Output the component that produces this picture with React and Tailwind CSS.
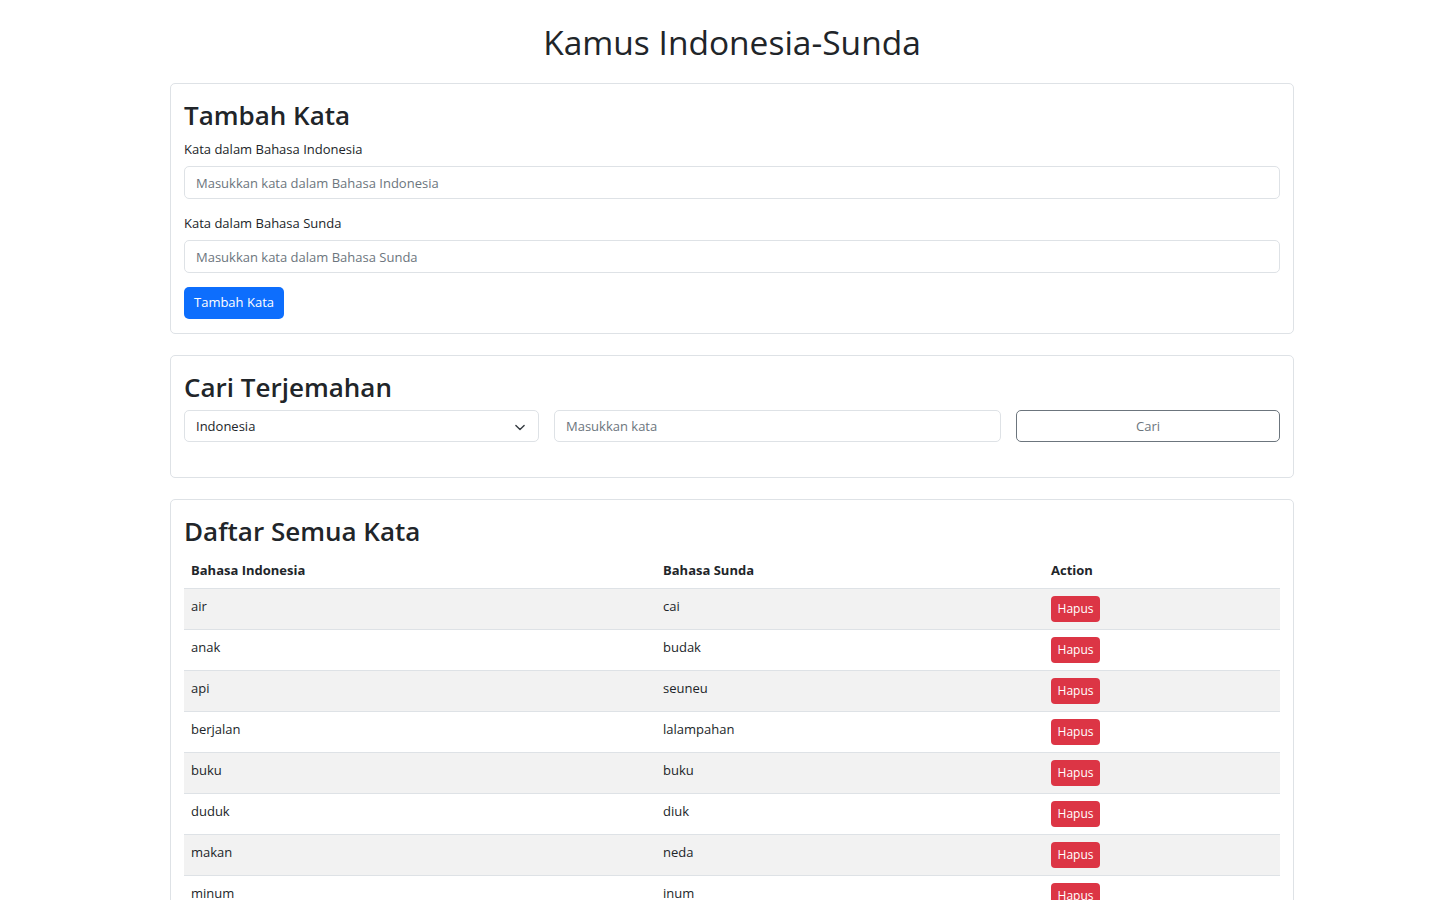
import React, { useState } from "react";

const words = [
  { id: "air", su: "cai" },
  { id: "anak", su: "budak" },
  { id: "api", su: "seuneu" },
  { id: "berjalan", su: "lalampahan" },
  { id: "buku", su: "buku" },
  { id: "duduk", su: "diuk" },
  { id: "makan", su: "neda" },
  { id: "minum", su: "inum" },
  { id: "pergi", su: "indit" },
  { id: "rumah", su: "imah" },
];

function Chevron() {
  return (
    <svg width="14" height="11" viewBox="0 0 16 16" className="text-[#343a40]">
      <path d="m2 5 6 6 6-6" fill="none" stroke="currentColor" strokeWidth="2" strokeLinecap="round" strokeLinejoin="round" />
    </svg>
  );
}

export default function App() {
  const [list, setList] = useState(words);
  const [lang, setLang] = useState("Indonesia");

  const remove = (id) => setList((l) => l.filter((w) => w.id !== id));

  return (
    <div className="min-h-screen bg-white text-[#212529] font-['Open_Sans',sans-serif]">
      <div className="w-[1124px] ml-[170px] pt-[21px]">
        <h1 className="text-center text-[33.5px] leading-[43px] font-medium mb-[19px]">
          Kamus Indonesia-Sunda
        </h1>

        <div className="border border-[#dee2e6] rounded-[5px] px-[13px] py-[14px] mb-[21px]">
          <h2 className="text-[26px] leading-[34px] font-semibold mb-[7px]">Tambah Kata</h2>
          <label className="block text-[13px] leading-[21px] mb-[6px]">Kata dalam Bahasa Indonesia</label>
          <input
            className="block w-full h-[33px] border border-[#dee2e6] rounded-[5px] px-[11px] text-[13px] outline-none placeholder:text-[#6c757d]"
            placeholder="Masukkan kata dalam Bahasa Indonesia"
          />
          <label className="block text-[13px] leading-[21px] mt-[14px] mb-[6px]">Kata dalam Bahasa Sunda</label>
          <input
            className="block w-full h-[33px] border border-[#dee2e6] rounded-[5px] px-[11px] text-[13px] outline-none placeholder:text-[#6c757d]"
            placeholder="Masukkan kata dalam Bahasa Sunda"
          />
          <button className="mt-[14px] h-[32px] w-[100px] bg-[#0d6efd] text-white text-[13px] rounded-[5px]">
            Tambah Kata
          </button>
        </div>

        <div className="border border-[#dee2e6] rounded-[5px] px-[13px] pt-[14px] pb-[35px] mb-[21px]">
          <h2 className="text-[26px] leading-[34px] font-semibold mb-[6px]">Cari Terjemahan</h2>
          <div className="grid grid-cols-[355px_447px_1fr] gap-[15px]">
            <div className="relative h-[32px] border border-[#dee2e6] rounded-[5px] flex items-center px-[11px] pt-[2px] text-[13px]">
              <span className="flex-1">{lang}</span>
              <Chevron />
              <select
                value={lang}
                onChange={(e) => setLang(e.target.value)}
                className="absolute inset-0 opacity-0 cursor-pointer"
              >
                <option>Indonesia</option>
                <option>Sunda</option>
              </select>
            </div>
            <input
              className="h-[32px] border border-[#dee2e6] rounded-[5px] px-[11px] text-[13px] outline-none placeholder:text-[#6c757d]"
              placeholder="Masukkan kata"
            />
            <button className="h-[32px] border border-[#6c757d] rounded-[5px] text-[#6c757d] text-[13px] pt-[2px]">
              Cari
            </button>
          </div>
        </div>

        <div className="border border-[#dee2e6] rounded-[5px] px-[13px] pt-[14px]">
          <h2 className="text-[26px] leading-[34px] font-semibold mb-[5px]">Daftar Semua Kata</h2>
          <table className="w-full border-collapse text-[13px] table-fixed">
            <colgroup>
              <col className="w-[472px]" />
              <col className="w-[388px]" />
              <col />
            </colgroup>
            <thead>
              <tr className="border-b border-[#dee2e6]">
                <th className="text-left font-bold px-[7px] py-[7px] leading-[21px]">Bahasa Indonesia</th>
                <th className="text-left font-bold px-[7px] py-[7px] leading-[21px]">Bahasa Sunda</th>
                <th className="text-left font-bold px-[7px] py-[7px] leading-[21px]">Action</th>
              </tr>
            </thead>
            <tbody>
              {list.map((w, i) => (
                <tr key={w.id} className={`border-b border-[#dee2e6] ${i % 2 === 0 ? "bg-[#f2f2f2]" : "bg-white"}`}>
                  <td className="align-top px-[7px] pt-[7px] pb-[7px] leading-[21px]">{w.id}</td>
                  <td className="align-top px-[7px] pt-[7px] pb-[7px] leading-[21px]">{w.su}</td>
                  <td className="align-top px-[7px] py-[7px]">
                    <button
                      onClick={() => remove(w.id)}
                      className="h-[26px] w-[49px] bg-[#dc3545] text-white text-[12px] rounded-[4px]"
                    >
                      Hapus
                    </button>
                  </td>
                </tr>
              ))}
            </tbody>
          </table>
          <div className="h-[14px]" />
        </div>
        <div className="h-[40px]" />
      </div>
    </div>
  );
}
